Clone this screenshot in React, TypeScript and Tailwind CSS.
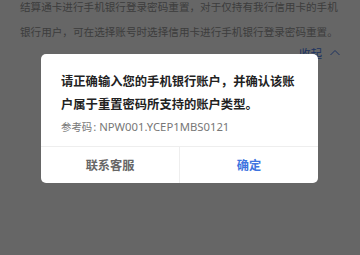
export default function App() {
  return (
    <div className="relative h-[255px] w-[360px] overflow-hidden bg-white font-['Noto_Sans_CJK_SC','Noto_Sans',sans-serif]">
      {/* page behind the overlay */}
      <div className="-mt-[6px] px-5">
        <p className="text-[10.6px] leading-[25px] text-[#999]">
          结算通卡进行手机银行登录密码重置，对于仅持有我行信用卡的手机银行用户，可在选择账号时选择信用卡进行手机银行登录密码重置。
        </p>
        <div className="mt-[1px] flex items-center justify-end gap-[8px] text-[11.5px] leading-[16px] text-[#4a7ef0]">
          <span>收起</span>
          <svg width="10" height="10" viewBox="0 0 10 10" fill="none" stroke="currentColor" strokeWidth="1">
            <path d="M0.5 7 L5 2.5 L9.5 7" />
          </svg>
        </div>
      </div>

      {/* mask + dialog */}
      <div className="absolute inset-0 bg-black/60">
        <div className="ml-[41px] mt-[54px] w-[277px] overflow-hidden rounded-[5px] bg-white">
          <div className="px-5 pb-[10px] pt-[16px]">
            <p className="text-[12.3px] font-semibold leading-[23px] text-[#222]">
              请正确输入您的手机银行账户，并确认该账户属于重置密码所支持的账户类型。
            </p>
            <p className="mt-[2px] flex items-baseline leading-[18px] text-[#777]">
              <span className="text-[10.4px]">参考码</span>
              <span className="ml-[1px] font-['Noto_Sans',sans-serif] text-[11.3px]">: NPW001.YCEP1MBS0121</span>
            </p>
          </div>
          <div className="flex h-[37px] border-t border-[#eeeeee] text-[12.2px] font-semibold">
            <button className="flex-1 text-[#666]">联系客服</button>
            <button className="flex-1 border-l border-[#eeeeee] text-[#3d74e0]">确定</button>
          </div>
        </div>
      </div>
    </div>
  )
}
